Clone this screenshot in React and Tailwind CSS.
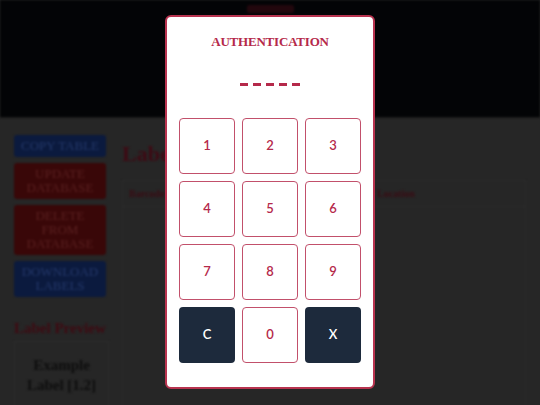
import React from "react";

const serif = { fontFamily: '"Liberation Serif", "Times New Roman", serif' };

function Key({ label, dark }) {
  return (
    <button
      className={
        dark
          ? "w-[56px] h-[56px] rounded-[4px] bg-[#1d2a3c] text-white text-[13px] font-semibold flex items-center justify-center"
          : "w-[56px] h-[56px] rounded-[4px] bg-white border border-[#c2506b] text-[#b5294a] text-[13px] font-semibold flex items-center justify-center"
      }
      style={{ fontFamily: 'Lato, "Open Sans", sans-serif' }}
    >
      {label}
    </button>
  );
}

export default function App() {
  const keys = ["1", "2", "3", "4", "5", "6", "7", "8", "9", "C", "0", "X"];
  return (
    <div className="relative w-[540px] h-[405px] overflow-hidden bg-[#262626]">
      {/* dimmed, blurred background page */}
      <div className="flex flex-col w-full h-full blur-[0.8px]" style={serif}>
        <div className="h-[118px] shrink-0 bg-[#030406] flex justify-center border-b border-[#1a1a1a]">
          <div className="mt-[5px] w-[47px] h-[8px] rounded-[2px] bg-[#22070d]" />
        </div>
        <div className="flex flex-1 pt-[17px] pl-[14px] gap-[16px]">
          <div className="flex flex-col w-[92px] shrink-0">
            <div className="flex flex-col gap-[6px] text-[13px] leading-[14px] text-center uppercase">
              <div className="bg-[#0b1a3e] text-[#24386a] rounded-[3px] py-[4px]">Copy Table</div>
              <div className="bg-[#390708] text-[#5a2020] rounded-[3px] py-[4px]">Update<br />Database</div>
              <div className="bg-[#390708] text-[#5a2020] rounded-[3px] py-[4px]">Delete<br />From<br />Database</div>
              <div className="bg-[#0b1a3e] text-[#24386a] rounded-[3px] py-[4px]">Download<br />Labels</div>
            </div>
            <div className="mt-[22px] text-[15px] font-bold text-[#3f0a12] whitespace-nowrap leading-[18px]">Label Preview</div>
            <div className="mt-[4px] w-[95px] h-[80px] border border-[#2c2c2c] text-center text-[15px] font-bold leading-[20px] text-[#0e0e0e] pt-[13px]">
              Example<br />Label [1.2]
            </div>
          </div>
          <div className="flex-1 flex flex-col pr-[14px]">
            <div className="mt-[5px] text-[22px] font-bold text-[#3e0a14] leading-[28px]">Label Preview</div>
            <div className="mt-[12px] border border-[#2b2b2b] flex-1">
              <div className="flex h-[26px] items-center border-b border-[#2b2b2b] text-[10px] font-bold text-[#3a0b13]">
                <div className="pl-[6px] w-[254px] shrink-0">Barcode</div>
                <div>Location</div>
              </div>
            </div>
          </div>
        </div>
      </div>

      {/* modal */}
      <div className="absolute left-[165px] top-[15px] w-[210px] bg-white border-2 border-[#b8334f] rounded-[6px] px-[12px] pt-[17px] pb-[24px] flex flex-col items-center">
        <div className="h-[16px] leading-[16px] text-[13px] font-bold text-[#b5294a] tracking-[-0.2px]" style={serif}>
          AUTHENTICATION
        </div>
        <div className="mt-[33px] flex gap-[5px]">
          {[0, 1, 2, 3, 4].map((i) => (
            <div key={i} className="w-[8px] h-[3px] bg-[#b5294a]" />
          ))}
        </div>
        <div className="mt-[32px] grid grid-cols-3 gap-[7px]">
          {keys.map((k) => (
            <Key key={k} label={k} dark={k === "C" || k === "X"} />
          ))}
        </div>
      </div>
    </div>
  );
}
